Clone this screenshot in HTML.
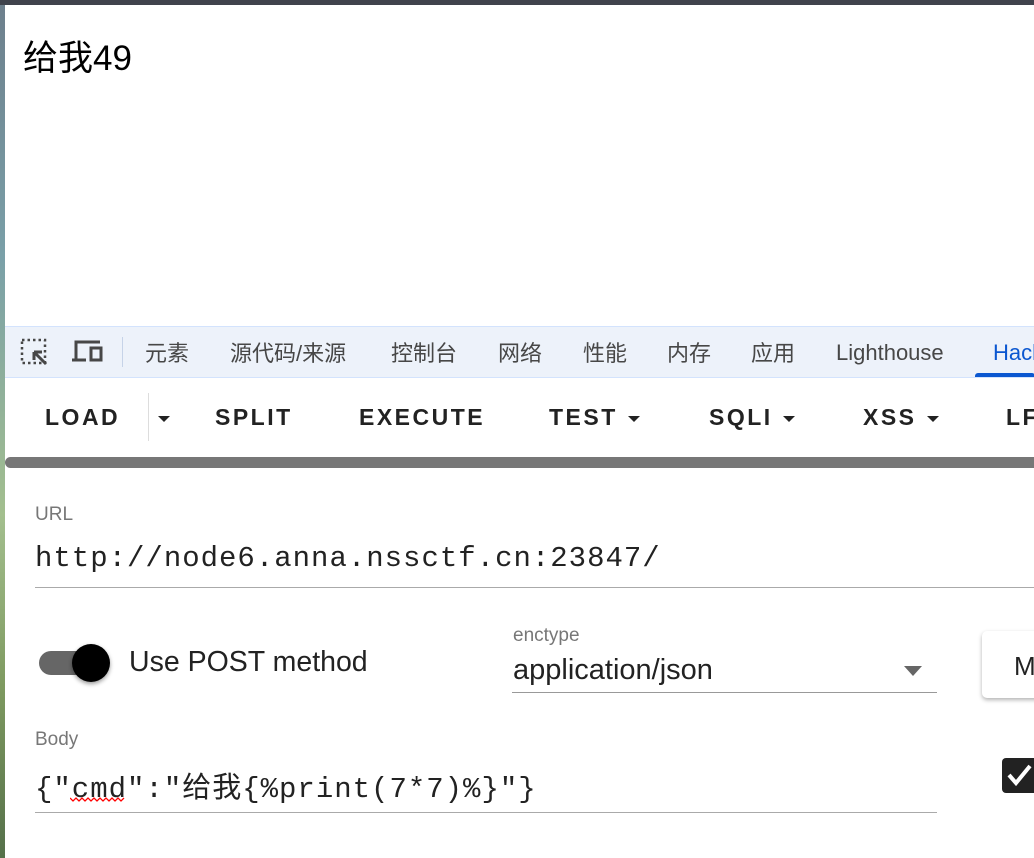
<!DOCTYPE html><html><head><meta charset="utf-8"><style>
body{margin:0;width:1034px;height:858px;overflow:hidden;background:#fff;position:relative;font-family:"Liberation Sans","Noto Sans CJK SC",sans-serif}
.a{position:absolute}
.tab{position:absolute;top:336px;font-size:22px;color:#474747}
.btn{position:absolute;top:404px;font-size:23px;font-weight:bold;letter-spacing:2.5px;color:#222}
.car{display:inline-block;width:0;height:0;border-left:6px solid transparent;border-right:6px solid transparent;border-top:6px solid #222;vertical-align:middle;margin-left:10px}
.lbl{position:absolute;font-size:19px;color:#777}
.mono{font-family:"Liberation Mono","Noto Sans CJK SC",monospace}
</style></head><body>
<div class="a" style="left:0;top:0;width:5px;height:858px;background:linear-gradient(#6d7f8c,#7aa0a8 30%,#a3bf8e 60%,#7e9a60 80%,#55704a)"></div>
<div class="a" style="left:0;top:0;width:1034px;height:5px;background:#40434c"></div>
<div class="a" style="left:23px;top:30px;font-size:35px;color:#000">给我49</div>
<div class="a" style="left:5px;top:326px;width:1029px;height:50px;background:#edf2fa;border-top:1px solid #d3e3fd;border-bottom:1px solid #d3e3fd"></div>
<svg class="a" style="left:20px;top:338px" width="30" height="30" viewBox="0 0 30 30"><rect x="2" y="2" width="23" height="23" fill="none" stroke="#474747" stroke-width="2.5" stroke-dasharray="2.5 3"/><path d="M14 14 L26 26 M14 14 h8 M14 14 v8" stroke="#474747" stroke-width="3" fill="none"/></svg>
<svg class="a" style="left:72px;top:338px" width="32" height="28" viewBox="0 0 32 28"><path d="M4 22 V4 H28" stroke="#474747" stroke-width="3" fill="none"/><path d="M0 22 H14" stroke="#474747" stroke-width="3"/><rect x="19" y="10" width="10" height="12" fill="none" stroke="#474747" stroke-width="3"/></svg>
<div class="a" style="left:122px;top:337px;width:1px;height:30px;background:#c6d3e8"></div>
<div class="tab" style="left:145px">元素</div>
<div class="tab" style="left:230px">源代码/来源</div>
<div class="tab" style="left:391px">控制台</div>
<div class="tab" style="left:498px">网络</div>
<div class="tab" style="left:583px">性能</div>
<div class="tab" style="left:667px">内存</div>
<div class="tab" style="left:751px">应用</div>
<div class="tab" style="left:836px;top:340px">Lighthouse</div>
<div class="tab" style="left:993px;top:340px;color:#0b57d0">Hack</div>
<div class="a" style="left:975px;top:373px;width:60px;height:4px;background:#0b57d0;border-radius:3px 3px 0 0"></div>
<div class="btn" style="left:45px">LOAD</div>
<div class="a" style="left:148px;top:393px;width:1px;height:48px;background:#ddd"></div>
<div class="btn" style="left:148px"><span class="car"></span></div>
<div class="btn" style="left:215px">SPLIT</div>
<div class="btn" style="left:359px">EXECUTE</div>
<div class="btn" style="left:549px">TEST<span class="car"></span></div>
<div class="btn" style="left:709px">SQLI<span class="car"></span></div>
<div class="btn" style="left:863px">XSS<span class="car"></span></div>
<div class="btn" style="left:1006px">LFI</div>
<div class="a" style="left:5px;top:457px;width:1040px;height:11px;background:#777;border-radius:6px"></div>
<div class="lbl" style="left:35px;top:504px">URL</div>
<div class="a mono" style="left:35px;top:542px;font-size:29px;letter-spacing:1px;color:#222">http://node6.anna.nssctf.cn:23847/</div>
<div class="a" style="left:35px;top:587px;width:1000px;height:1px;background:#aaa"></div>
<div class="a" style="left:39px;top:651px;width:60px;height:24px;border-radius:12px;background:#666"></div>
<div class="a" style="left:72px;top:644px;width:38px;height:38px;border-radius:50%;background:#000;box-shadow:0 2px 4px rgba(0,0,0,.4)"></div>
<div class="a" style="left:129px;top:646px;font-size:28.5px;color:#222">Use POST method</div>
<div class="lbl" style="left:513px;top:625px">enctype</div>
<div class="a" style="left:513px;top:654px;font-size:29px;color:#222">application/json</div>
<div class="a" style="left:904px;top:666px;width:0;height:0;border-left:9px solid transparent;border-right:9px solid transparent;border-top:10px solid #666"></div>
<div class="a" style="left:512px;top:692px;width:425px;height:1px;background:#999"></div>
<div class="a" style="left:982px;top:631px;width:70px;height:67px;background:#fff;border-radius:5px;box-shadow:0 2px 4px rgba(0,0,0,.3)"></div>
<div class="a" style="left:1014px;top:651px;font-size:26px;color:#222">M</div>
<div class="lbl" style="left:35px;top:729px">Body</div>
<div class="a mono" style="left:35px;top:764px;font-size:29px;letter-spacing:1px;color:#222">{"cmd":"给我{%print(7*7)%}"}</div>
<svg class="a" style="left:70px;top:796px" width="58" height="6"><path d="M0 2 l3 3 l3 -3 l3 3 l3 -3 l3 3 l3 -3 l3 3 l3 -3 l3 3 l3 -3 l3 3 l3 -3 l3 3 l3 -3 l3 3 l3 -3 l3 3 l3 -3" stroke="red" fill="none" stroke-width="1.3"/></svg>
<div class="a" style="left:35px;top:812px;width:902px;height:1px;background:#aaa"></div>
<div class="a" style="left:1002px;top:758px;width:40px;height:35px;background:#222;border-radius:4px"></div>
<svg class="a" style="left:1004px;top:760px" width="30" height="30"><path d="M5 15 L12 23 L26 6" stroke="#fff" stroke-width="4" fill="none"/></svg>
</body></html>
